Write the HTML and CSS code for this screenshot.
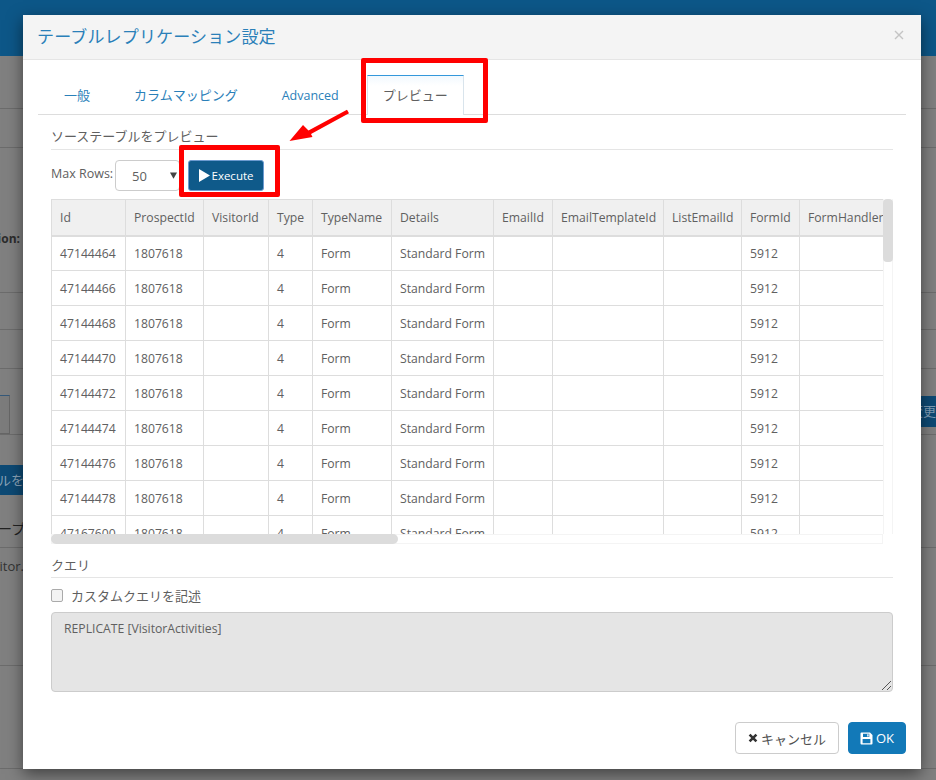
FILE: index.html
```html
<!DOCTYPE html>
<html lang="ja">
<head>
<meta charset="utf-8">
<title>テーブルレプリケーション設定</title>
<link rel="stylesheet" href="styles.css">
</head>
<body>
<div class="page">
  <div class="bg-header"></div>
  <div class="bg-row h-a"></div>
  <div class="bg-row h-b"></div>
  <div class="bg-row h-c"><span class="bg-ion">Description:</span></div>
  <div class="bg-row h-d"></div>
  <div class="bg-row h-e"></div>
  <div class="bg-row h-f"><div class="bg-box"></div><div class="bg-btn-r">変更</div></div>
  <div class="bg-row h-g"><div class="bg-btn-l">ブルを</div><div class="bg-title">ープ</div></div>
  <div class="bg-row h-h"><span class="bg-visitor">sitor.</span></div>
  <div class="bg-row h-i"></div>
</div>

<div class="modal">
  <header class="modal-header">
    <h4 class="modal-title">テーブルレプリケーション設定</h4>
    <svg class="close" viewBox="0 0 10 10" width="10" height="10"><path d="M1 1L9 9M9 1L1 9" stroke="#c4c4c4" stroke-width="1.4" fill="none"/></svg>
  </header>
  <div class="modal-body">
    <ul class="tabs">
      <li class="tab">一般</li>
      <li class="tab">カラムマッピング</li>
      <li class="tab">Advanced</li>
      <li class="tab active">プレビュー</li>
    </ul>
    <div class="pane">
      <div class="legend legend-first">ソーステーブルをプレビュー</div>
      <div class="form-row">
        <label class="lbl">Max Rows:</label>
        <div class="select">50<svg class="caret" viewBox="0 0 7 7" width="7" height="7"><path d="M0 .5H7L3.5 6.8Z" fill="#444"/></svg></div>
        <button class="btn-exec"><svg viewBox="0 0 11 13" width="11" height="13"><path d="M0 0L11 6.5L0 13Z" fill="#fff"/></svg>Execute</button>
      </div>
      <div class="grid-wrap">
        <div class="grid-view">
          <table class="grid">
            <colgroup><col class="c1"><col class="c2"><col class="c3"><col class="c4"><col class="c5"><col class="c6"><col class="c7"><col class="c8"><col class="c9"><col class="c10"><col class="c11"></colgroup>
            <thead><tr><th>Id</th><th>ProspectId</th><th>VisitorId</th><th>Type</th><th>TypeName</th><th>Details</th><th>EmailId</th><th>EmailTemplateId</th><th>ListEmailId</th><th>FormId</th><th>FormHandlerId</th></tr></thead>
            <tbody>
              <tr><td>47144464</td><td>1807618</td><td></td><td>4</td><td>Form</td><td>Standard Form</td><td></td><td></td><td></td><td>5912</td><td></td></tr>
              <tr><td>47144466</td><td>1807618</td><td></td><td>4</td><td>Form</td><td>Standard Form</td><td></td><td></td><td></td><td>5912</td><td></td></tr>
              <tr><td>47144468</td><td>1807618</td><td></td><td>4</td><td>Form</td><td>Standard Form</td><td></td><td></td><td></td><td>5912</td><td></td></tr>
              <tr><td>47144470</td><td>1807618</td><td></td><td>4</td><td>Form</td><td>Standard Form</td><td></td><td></td><td></td><td>5912</td><td></td></tr>
              <tr><td>47144472</td><td>1807618</td><td></td><td>4</td><td>Form</td><td>Standard Form</td><td></td><td></td><td></td><td>5912</td><td></td></tr>
              <tr><td>47144474</td><td>1807618</td><td></td><td>4</td><td>Form</td><td>Standard Form</td><td></td><td></td><td></td><td>5912</td><td></td></tr>
              <tr><td>47144476</td><td>1807618</td><td></td><td>4</td><td>Form</td><td>Standard Form</td><td></td><td></td><td></td><td>5912</td><td></td></tr>
              <tr><td>47144478</td><td>1807618</td><td></td><td>4</td><td>Form</td><td>Standard Form</td><td></td><td></td><td></td><td>5912</td><td></td></tr>
              <tr><td>47167600</td><td>1807618</td><td></td><td>4</td><td>Form</td><td>Standard Form</td><td></td><td></td><td></td><td>5912</td><td></td></tr>
            </tbody>
          </table>
          <div class="sb-v-track"><div class="sb-v"></div></div>
        </div>
        <div class="sb-h-track"><div class="sb-h"></div></div>
      </div>
      <div class="legend legend-query">クエリ</div>
      <label class="check"><span class="box"></span>カスタムクエリを記述</label>
      <div class="query">REPLICATE [VisitorActivities]
        <svg class="grip" viewBox="0 0 9 9" width="9" height="9"><path d="M0 9L9 0M5 9L9 5" stroke="#555" stroke-width="1" fill="none"/></svg>
      </div>
    </div>
  </div>
  <footer class="modal-footer">
    <button class="btn btn-cancel"><svg viewBox="0 0 10 10" width="10" height="10"><path d="M1.6 1.6L8.4 8.4M8.4 1.6L1.6 8.4" stroke="#333" stroke-width="2.6" fill="none"/></svg>キャンセル</button>
    <button class="btn btn-ok"><svg viewBox="0 0 13 13" width="13" height="13"><path fill-rule="evenodd" fill="#fff" d="M1.5.5H10L12.5 3V11.5A1 1 0 0 1 11.5 12.5H1.5A1 1 0 0 1 .5 11.5V1.5A1 1 0 0 1 1.5.5ZM3 1.7V5H9.3V1.7ZM7.2 2.2H8.6V4.4H7.2ZM2.6 7V11.3H10.4V7Z"/></svg>OK</button>
  </footer>
</div>

<div class="mark mark-tab"></div>
<div class="mark mark-exec"></div>
<svg class="mark-arrow" viewBox="0 0 70 40" width="70" height="40"><path d="M58 .8L60 4.2L22 25L23.5 28L.5 32L14 16L19.5 21.5Z" fill="#f00"/></svg>
</body>
</html>
```
FILE: styles.css
```css
* { box-sizing: border-box; }
html, body { margin: 0; height: 100%; overflow: hidden; }
body { font-family: "Open Sans", "Noto Sans CJK JP", sans-serif; font-size: 12px; color: #606060; background: #808080; }

.page { height: 780px; display: flex; flex-direction: column; }
.bg-header { height: 56px; background: #0d5788; }
.bg-row { border-bottom: 1px solid #6c6c6c; position: relative; display: flex; overflow: hidden; color: #2a2a2a; }
.h-a { height: 53px; }
.h-b { height: 39px; }
.h-c { height: 145px; }
.h-d { height: 37px; }
.h-e { height: 39px; }
.h-f { height: 66px; }
.h-g { height: 113px; }
.h-h { height: 118px; }
.h-i { height: 103px; }
.bg-ion { position: absolute; right: 916px; top: 82px; font-weight: 700; font-size: 12px; color: #2c2c2c; white-space: nowrap; }
.bg-box { position: absolute; left: -10px; top: 26px; width: 20px; height: 39px; border: 1px solid #666; border-top-color: #35597a; background: #7c7c7c; }
.bg-btn-r { position: absolute; right: 0; top: 27px; width: 30px; height: 31px; background: #0d4a75; color: #7f9db5; font-size: 13px; line-height: 31px; text-align: right; }
.bg-btn-l { position: absolute; left: 0; top: 30px; width: 24px; height: 30px; background: #0d4a75; color: #8aa3b8; font-size: 13px; line-height: 30px; white-space: nowrap; overflow: hidden; display: flex; justify-content: flex-end; }
.bg-title { position: absolute; left: -2px; top: 84px; font-size: 14px; line-height: 20px; color: #222; white-space: nowrap; }
.bg-visitor { position: absolute; right: 912px; top: 9px; font-size: 13px; color: #333; }

.modal { position: absolute; left: 23px; top: 15px; width: 898px; height: 754px; background: #fff; box-shadow: 0 5px 15px rgba(0,0,0,.5); display: flex; flex-direction: column; }
.modal-header { height: 45px; background: #f4f4f4; border-bottom: 1px solid #e5e5e5; padding: 0 17px 0 14px; display: flex; align-items: center; justify-content: space-between; }
.modal-title { margin: 0; font-size: 17px; font-weight: 400; letter-spacing: .15px; color: #2a80b9; line-height: 44px; }
.close { margin-bottom: 5px; }
.modal-body { flex: 1; padding: 15px 15px 0; }
.tabs { list-style: none; margin: 0; padding: 0 0 0 9px; display: flex; height: 40px; border-bottom: 1px solid #ddd; }
.tab { margin-right: 10px; padding: 0 16px; height: 40px; border: 1px solid transparent; border-bottom: 0; font-size: 13px; line-height: 39px; color: #2a80b9; }
.tab:nth-child(3) { font-size: 12.5px; line-height: 40px; }
.tab.active { color: #606060; border-color: #d9e4ec; border-top: 1px solid #3498db; background: linear-gradient(#f2f9fe, #fff 10px); height: 40px; margin-left: 1px; padding: 0 15px; }
.pane { padding: 0 13px; }
.legend { font-size: 13px; line-height: 15px; color: #606060; border-bottom: 1px solid #e5e5e5; }
.legend-first { margin-top: 14px; height: 21px; }
.form-row { display: flex; align-items: center; margin-top: 10px; height: 30px; }
.lbl { font-size: 12.5px; width: 64px; padding-bottom: 4px; }
.select { position: relative; width: 65px; height: 31px; border: 1px solid #ccc; border-radius: 4px; padding-left: 16px; font-size: 13px; line-height: 30px; color: #606060; }
.caret { position: absolute; right: 2px; top: 11px; }
.btn-exec { margin-left: 8px; width: 76px; height: 31px; background: #0f5a8a; border: 1px solid #6c9bd0; border-radius: 3px; color: #fff; font: 500 11.5px "Open Sans", sans-serif; display: flex; align-items: center; justify-content: center; gap: 2px; padding: 0; }
.grid-wrap { margin-top: 9px; width: 842px; position: relative; }
.grid-view { height: 335px; overflow: hidden; position: relative; }
.grid { border-collapse: collapse; table-layout: fixed; width: 868px; font-size: 12.2px; color: #606060; }
.grid th, .grid td { border: 1px solid #ddd; padding: 0 8px; height: 35px; text-align: left; font-weight: 400; white-space: nowrap; overflow: hidden; }
.grid th { background: #f0f0f0; height: 36px; border-bottom-width: 2px; }
.c1 { width: 74px; } .c2 { width: 78px; } .c3 { width: 65px; } .c4 { width: 44px; } .c5 { width: 79px; }
.c6 { width: 102px; } .c7 { width: 59px; } .c8 { width: 111px; } .c9 { width: 78px; } .c10 { width: 58px; } .c11 { width: 120px; }
.sb-v-track { position: absolute; right: 0; top: 0; width: 10px; height: 100%; background: #fff; border-left: 1px solid #f4f4f4; border-right: 1px solid #f4f4f4; }
.sb-v { position: absolute; left: -1px; top: 0; width: 10px; height: 63px; background: #dcdcdc; border-radius: 4px; }
.sb-h-track { height: 10px; width: 832px; border: 1px solid #f4f4f4; position: relative; background: #fff; }
.sb-h { position: absolute; left: -1px; top: -1px; width: 347px; height: 10px; background: #dcdcdc; border-radius: 5px; }
.legend-query { margin-top: 12px; height: 22px; padding-top: 2px; }
.check { display: flex; align-items: center; margin-top: 8px; height: 19px; font-size: 13px; color: #606060; }
.box { width: 12px; height: 13px; border: 1px solid #aaa; border-radius: 2px; background: #f3f3f3; margin-right: 8px; }
.query { position: relative; margin-top: 7px; height: 80px; background: #e5e5e5; border: 1px solid #ccc; border-radius: 4px; padding: 7px 12px; font-size: 12.2px; line-height: 17px; color: #606060; }
.grip { position: absolute; right: 1px; bottom: 1px; }
.modal-footer { height: 47px; padding: 0 15px 15px 0; display: flex; justify-content: flex-end; gap: 9px; }
.btn { height: 32px; border-radius: 4px; font: 400 13px "Open Sans", "Noto Sans CJK JP", sans-serif; display: flex; align-items: center; justify-content: center; padding: 0; }
.btn-cancel { width: 104px; background: #fff; border: 1px solid #ccc; color: #505050; gap: 3px; }
.btn-ok { width: 58px; background: #1279b8; border: 1px solid #1279b8; color: #fff; gap: 3px; font-weight: 500; }

.mark { position: absolute; border: 5px solid #f00; border-radius: 2px; }
.mark-tab { left: 361px; top: 58px; width: 127px; height: 65px; }
.mark-exec { left: 179px; top: 145px; width: 101px; height: 52px; }
.mark-arrow { position: absolute; left: 289px; top: 109px; }
```
